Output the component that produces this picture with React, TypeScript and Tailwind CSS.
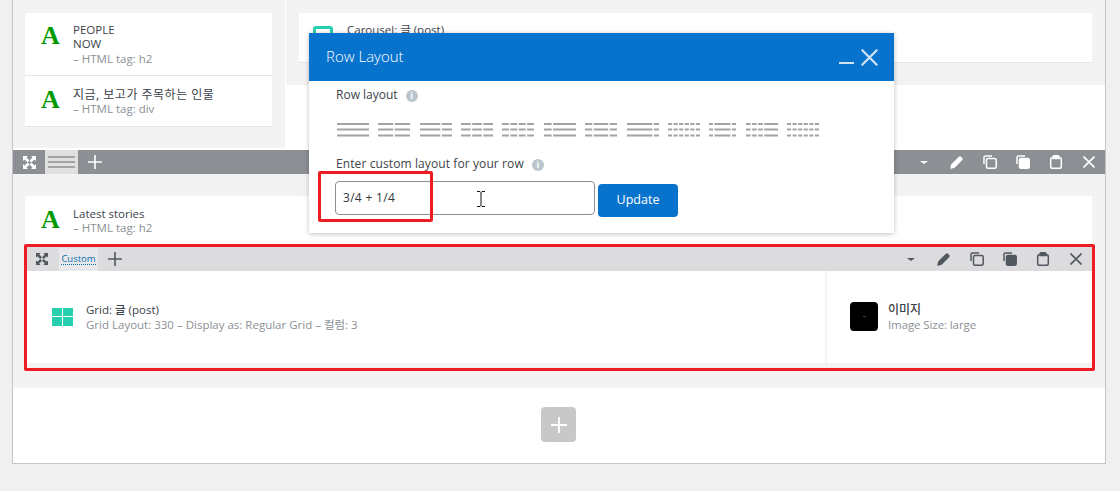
import type { ReactNode } from "react";

const LAYOUTS = [
  [1],
  [1 / 2, 1 / 2],
  [2 / 3, 1 / 3],
  [1 / 3, 1 / 3, 1 / 3],
  [1 / 4, 1 / 4, 1 / 4, 1 / 4],
  [1 / 4, 3 / 4],
  [1 / 4, 1 / 2, 1 / 4],
  [5 / 6, 1 / 6],
  [1 / 6, 1 / 6, 1 / 6, 1 / 6, 1 / 6, 1 / 6],
  [1 / 6, 4 / 6, 1 / 6],
  [1 / 6, 1 / 6, 1 / 6, 1 / 2],
  [1 / 6, 1 / 6, 1 / 6, 1 / 6, 1 / 6, 1 / 6],
];

function LayoutIcon({ parts, width = 32, color = "#a3a3a3" }: { parts: number[]; width?: number; color?: string }) {
  const gap = 1.5;
  const free = width - gap * (parts.length - 1);
  let x = 0;
  const rects = parts.map((p) => {
    const r = { x, w: free * p };
    x += r.w + gap;
    return r;
  });
  return (
    <svg width={width} height="14" viewBox={`0 0 ${width} 14`} className="shrink-0">
      {[0, 5.5, 11.5].map((y) =>
        rects.map((r) => <rect key={`${y}-${r.x}`} x={r.x} y={y} width={r.w} height="2" fill={color} />)
      )}
    </svg>
  );
}

function ExpandIcon({ className }: { className: string }) {
  return (
    <svg viewBox="0 0 13 13" className={className} fill="currentColor">
      <path d="M0 0h5L3.5 1.5 6.5 4.6 4.6 6.5 1.5 3.5 0 5z" />
      <path d="M13 0v5L11.5 3.5 8.4 6.5 6.5 4.6 9.5 1.5 8 0z" />
      <path d="M0 13V8l1.5 1.5L4.6 6.5 6.5 8.4 3.5 11.5 5 13z" />
      <path d="M13 13H8l1.5-1.5L6.5 8.4 8.4 6.5 11.5 9.5 13 8z" />
    </svg>
  );
}

function PlusIcon({ className }: { className: string }) {
  return (
    <svg viewBox="0 0 14 14" className={className} stroke="currentColor" strokeWidth="1.6" fill="none">
      <path d="M7 0v14M0 7h14" />
    </svg>
  );
}

function CloseIcon({ className }: { className: string }) {
  return (
    <svg viewBox="0 0 12 12" className={className} stroke="currentColor" strokeWidth="1.6" fill="none">
      <path d="M.5.5l11 11M11.5.5l-11 11" />
    </svg>
  );
}

function PencilIcon() {
  return (
    <svg viewBox="0 0 14 14" className="w-[13px] h-[13px]" fill="none" stroke="currentColor" strokeWidth="1.4" strokeLinejoin="round">
      <path d="M1 13l.9-3.6 7.9-7.9a1.3 1.3 0 0 1 1.8 0l.9.9a1.3 1.3 0 0 1 0 1.8l-7.9 7.9z" fill="currentColor" />
    </svg>
  );
}

function CopyIcon() {
  return (
    <svg viewBox="0 0 14 14" className="w-[14px] h-[14px]" fill="none" stroke="currentColor" strokeWidth="1.5">
      <path d="M1 9V2.5A1.5 1.5 0 0 1 2.5 1H9" />
      <rect x="3.5" y="3.5" width="9.7" height="9.7" rx="1.5" />
    </svg>
  );
}

function DuplicateIcon() {
  return (
    <svg viewBox="0 0 14 14" className="w-[14px] h-[14px]" fill="none" stroke="currentColor" strokeWidth="1.5">
      <path d="M1 9V2.5A1.5 1.5 0 0 1 2.5 1H9" />
      <rect x="3.5" y="3.5" width="9.7" height="9.7" rx="1.5" fill="currentColor" />
    </svg>
  );
}

function PasteIcon() {
  return (
    <svg viewBox="0 0 14 14" className="w-[14px] h-[14px]" fill="none" stroke="currentColor" strokeWidth="1.5">
      <rect x="1.7" y="2.7" width="10.6" height="10.6" rx="1.5" />
      <path d="M4 3.5V2a1.2 1.2 0 0 1 1.2-1.2h3.6A1.2 1.2 0 0 1 10 2v1.5z" fill="currentColor" />
    </svg>
  );
}

function RowActions({ className }: { className: string }) {
  return (
    <div className={`ml-auto flex items-center ${className}`}>
      <span className="w-[33px] flex justify-center">
        <span className="w-0 h-0 border-x-[4px] border-x-transparent border-t-[3px] border-t-current" />
      </span>
      <span className="w-[33px] flex justify-center"><PencilIcon /></span>
      <span className="w-[33px] flex justify-center"><CopyIcon /></span>
      <span className="w-[33px] flex justify-center"><DuplicateIcon /></span>
      <span className="w-[33px] flex justify-center"><PasteIcon /></span>
      <span className="w-[33px] flex justify-center"><CloseIcon className="w-[12px] h-[12px]" /></span>
    </div>
  );
}

function TextElement({ title, sub, className, iconClass }: { title: ReactNode; sub: string; className: string; iconClass: string }) {
  return (
    <div className={`flex bg-white ${className}`}>
      <span className={`w-[32px] text-[26px] leading-[26px] font-bold text-[#009a00] font-['Liberation_Serif',serif] ${iconClass}`}>A</span>
      <div className="text-[11.5px] leading-[14px] text-[#3c434a]">
        {title}
        <div className="text-[#8c8f94]">– {sub}</div>
      </div>
    </div>
  );
}

function InfoDot() {
  return (
    <span className="ml-[8px] mt-[2px] w-[12px] h-[12px] rounded-full bg-[#b9c6ce] text-white text-[9px] leading-[12px] font-bold text-center">i</span>
  );
}

function RowLayoutModal() {
  return (
    <div className="absolute left-[309px] top-[33px] w-[585px] h-[200px] bg-white shadow-[0_1px_5px_rgba(0,0,0,0.25)]">
      <div className="h-[48px] bg-[#0873cd] flex items-center pl-[17px] text-white">
        <span className="text-[15px] font-light -mt-[1px]">Row Layout</span>
        <span className="ml-auto mt-[12px] mr-[7px] w-[15px] h-[2px] bg-[#cfe3f5]" />
        <span className="mr-[16px] text-[#cfe3f5]"><CloseIcon className="w-[17px] h-[17px]" /></span>
      </div>
      <div className="pl-[27px] pt-[5px]">
        <div className="flex items-center h-[17px] text-[12px] font-medium text-[#3c434a]">
          Row layout
          <InfoDot />
        </div>
        <div className="flex mt-[20px] ml-px h-[14px] w-[482px] justify-between">
          {LAYOUTS.map((parts, i) => (
            <LayoutIcon key={i} parts={parts} width={i === 9 ? 27 : 32} />
          ))}
        </div>
        <div className="flex items-center h-[17px] mt-[18px] text-[12px] tracking-[0.1px] font-medium text-[#3c434a]">
          Enter custom layout for your row
          <InfoDot />
        </div>
        <div className="flex mt-[9px] -ml-px">
          <div className="w-[260px] h-[34px] border border-[#8c8f94] rounded-[4px] pl-[7px] flex items-center text-[12px] tracking-[0.3px] text-[#32373c]">3/4 + 1/4</div>
          <button className="ml-[3px] mt-[3px] w-[80px] h-[33px] bg-[#0873cd] rounded-[4px] text-white text-[12.5px]">Update</button>
        </div>
      </div>
      <svg viewBox="0 0 8 16" className="absolute left-[168px] top-[158px] w-[8px] h-[16px]" fill="none" stroke="#111" strokeWidth="1">
        <path d="M0 .5h3L4 1.5 5 .5h3M4 1.5v13M0 15.5h3l1-1 1 1h3" />
      </svg>
    </div>
  );
}

export default function App() {
  return (
    <div className="relative w-[1120px] h-[491px] overflow-hidden bg-[#f0f0f1] pl-[12px] font-['Open_Sans','Noto_Sans_CJK_KR',sans-serif]">
      <div className="w-[1094px] h-[464px] bg-white border-x border-b border-[#c3c4c7]">
        {/* top row */}
        <div className="flex h-[150px]">
          <div className="w-[272px] h-[148px] bg-[#f3f3f3] pl-[12px] pr-[13px] pt-[13px]">
            <TextElement
              className="pl-[16px] pt-[11px] h-[63px] border-b border-[#e5e5e5]"
              iconClass="-mt-[1px]"
              sub="HTML tag: h2"
              title={<div className="w-[60px] -mt-[1px] mb-[1px]">PEOPLE NOW</div>}
            />
            <TextElement
              className="pl-[16px] pt-[12px] h-[51px] border-b border-[#e5e5e5]"
              iconClass="-mt-[1px]"
              sub="HTML tag: div"
              title={<div className="text-[12px] tracking-[0.5px]">지금, 보고가 주목하는 인물</div>}
            />
          </div>
          <div className="ml-px flex-1 h-[85px] bg-[#f3f3f3] px-[13px] pt-[13px]">
            <div className="h-[50px] bg-white border-b border-[#e5e5e5] pl-[14px] pt-[10px] flex text-[11.5px] leading-[14px] text-[#3c434a]">
              <span className="w-[20px] h-[18px] mt-[3px] rounded-[3px] border-[3px] border-[#26cfad]" />
              <span className="ml-[14px]">Carousel: 글 (post)</span>
            </div>
          </div>
        </div>

        {/* row toolbar */}
        <div className="h-[24px] bg-[#8c8f94] flex items-center text-white">
          <span className="w-[32px] flex justify-center"><ExpandIcon className="w-[13px] h-[13px]" /></span>
          <span className="w-[33px] h-[24px] bg-[#e0e0e0] flex items-center justify-center">
            <svg width="27" height="12" viewBox="0 0 27 12" fill="#a3a3a3">
              <rect y="0" width="27" height="2" />
              <rect y="5" width="27" height="2" />
              <rect y="10" width="27" height="2" />
            </svg>
          </span>
          <span className="ml-[10px]"><PlusIcon className="w-[14px] h-[14px]" /></span>
          <RowActions className="text-white" />
        </div>

        {/* nested section */}
        <div className="h-[214px] bg-[#f3f3f3] pl-[12px] pr-[13px] pt-[22px]">
          <TextElement
            className="pl-[16px] pt-[11px] h-[49px]"
            iconClass=""
            sub="HTML tag: h2"
            title="Latest stories"
          />
          <div className="h-[26px] bg-[#dcdcde] flex items-center text-[#50575e] pt-[2px]">
            <span className="w-[33px] flex justify-center"><ExpandIcon className="w-[12px] h-[12px]" /></span>
            <span className="ml-px w-[39px] h-[23px] bg-[#e8e8ea] flex items-center justify-center text-[9.5px]">
              <span className="leading-[11px] text-[#0a6fb5] border-b border-dotted border-[#0a6fb5]">Custom</span>
            </span>
            <span className="ml-[10px]"><PlusIcon className="w-[14px] h-[14px]" /></span>
            <RowActions className="text-[#50575e]" />
          </div>
          <div className="flex h-[92px] bg-white">
            <div className="w-[800px] flex items-center pl-[27px] pb-[1px]">
              <span className="grid grid-cols-2 gap-px w-[21px] h-[18px] shrink-0">
                <span className="bg-[#26cfad]" />
                <span className="bg-[#26cfad]" />
                <span className="bg-[#26cfad]" />
                <span className="bg-[#26cfad]" />
              </span>
              <div className="ml-[13px] text-[11.5px] leading-[15px]">
                <div className="font-medium text-[#3c434a]">Grid: 글 (post)</div>
                <div className="text-[#8c8f94]">Grid Layout: 330 – Display as: Regular Grid – 컬럼: 3</div>
              </div>
            </div>
            <div className="flex-1 border-l-2 border-[#f3f3f3] flex items-center pl-[23px]">
              <span className="w-[28px] h-[29px] mb-[2px] rounded-[4px] bg-black flex items-center justify-center shrink-0">
                <span className="w-[3px] h-px bg-[#444]" />
              </span>
              <div className="ml-[10px] text-[11.5px] leading-[15px]">
                <div className="text-[12px] font-medium text-[#3c434a]">이미지</div>
                <div className="text-[#8c8f94] tracking-[-0.1px]">Image Size: large</div>
              </div>
            </div>
          </div>
        </div>

        {/* add row */}
        <div className="flex justify-center pt-[19px] pr-px">
          <span className="w-[35px] h-[35px] rounded-[4px] bg-[#c8c8c8] flex items-center justify-center text-white">
            <PlusIcon className="w-[16px] h-[16px]" />
          </span>
        </div>
      </div>

      <RowLayoutModal />

      {/* red annotation boxes */}
      <div className="absolute left-[24px] top-[244px] w-[1071px] h-[127px] border-[3px] border-[#ee1c25] rounded-[2px]" />
      <div className="absolute left-[318px] top-[171px] w-[115px] h-[51px] border-[3px] border-[#ee1c25] rounded-[2px]" />
    </div>
  );
}
